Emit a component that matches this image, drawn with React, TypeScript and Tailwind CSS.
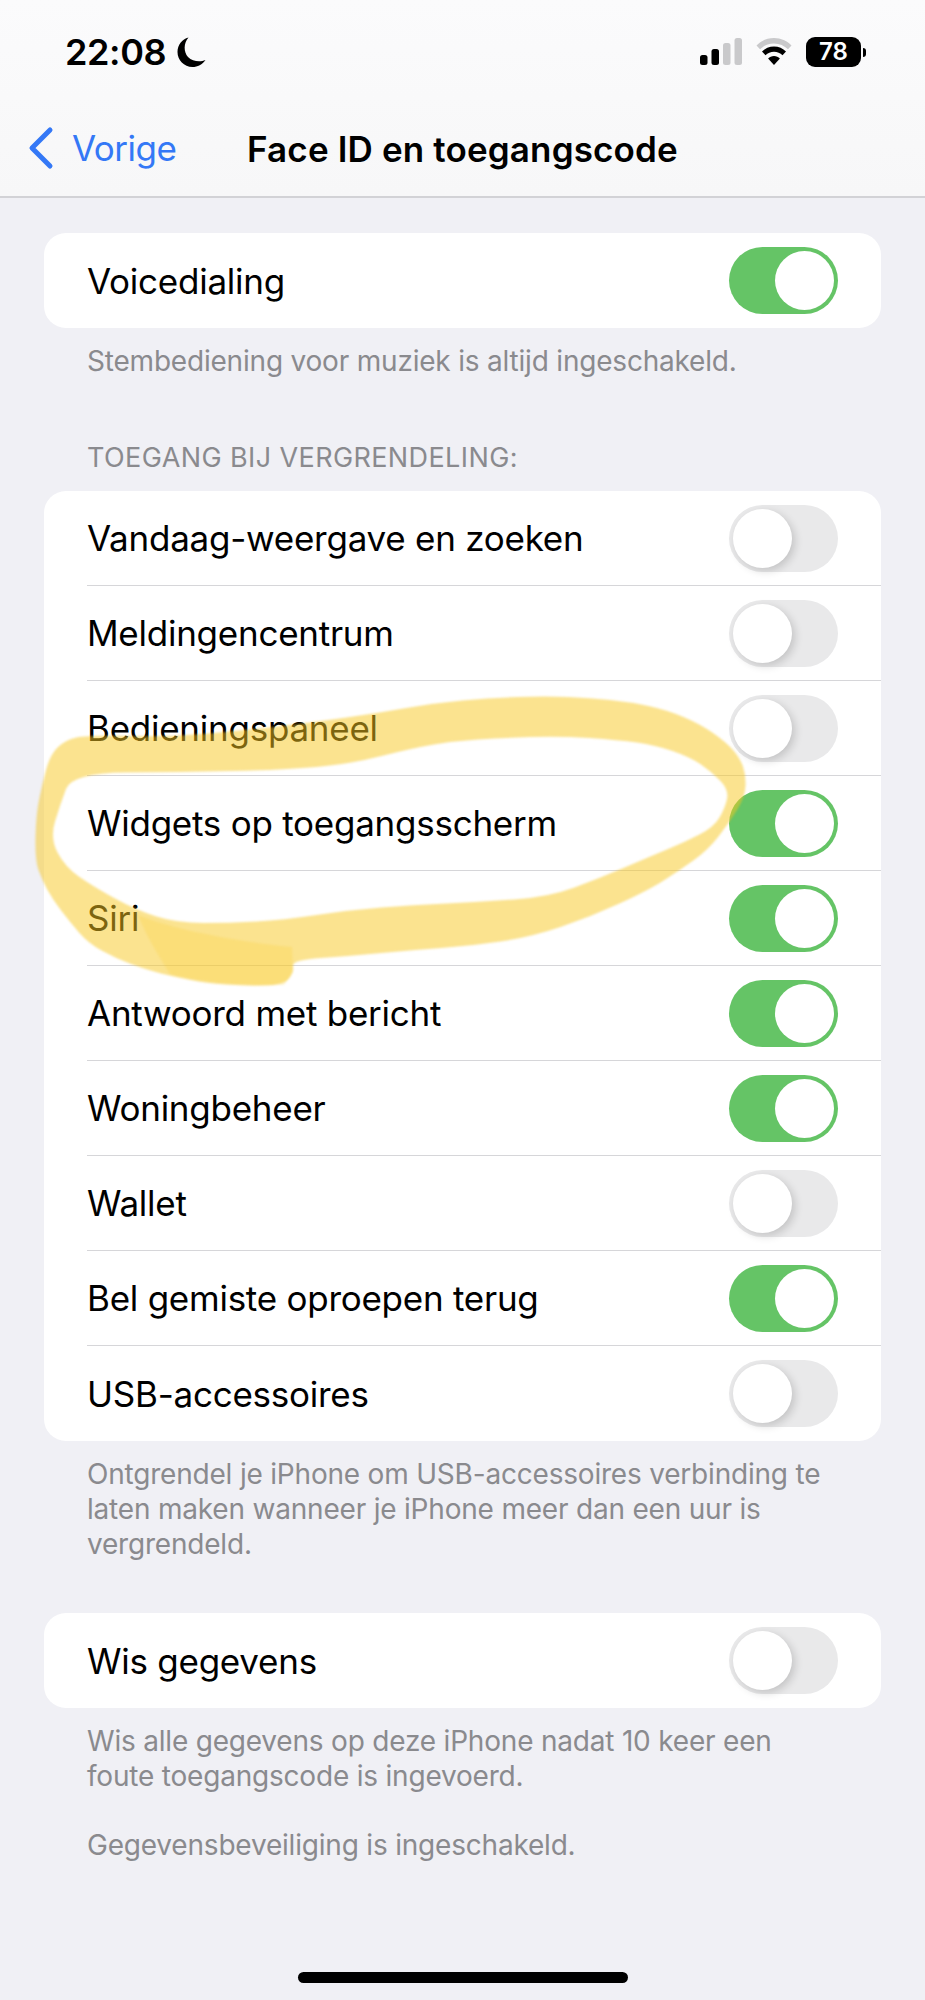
import React from 'react';

const FONT = "font-['Inter','Liberation_Sans',sans-serif]";

const Toggle: React.FC<{ on: boolean }> = ({ on }) => (
  <div className={`w-[109px] h-[67px] rounded-full flex items-center p-[4px] shrink-0 ${on ? 'bg-[#65c466] justify-end' : 'bg-[#e9e9ea] justify-start'}`}>
    <div className={`w-[59px] h-[59px] rounded-full bg-white ${on ? '' : 'shadow-[3px_3px_8px_rgba(0,0,0,0.16)]'}`} />
  </div>
);

const Row: React.FC<{ label: string; on: boolean; last?: boolean }> = ({ label, on, last }) => (
  <div className="pl-[43px]">
    <div className={`h-[95px] flex items-center justify-between pr-[43px] ${last ? '' : 'border-b border-[#d6d6d9]'}`}>
      <span className="text-[35px] leading-[42px] text-black tracking-[-0.25px]">{label}</span>
      <Toggle on={on} />
    </div>
  </div>
);

const Note: React.FC<{ children: React.ReactNode; className?: string }> = ({ children, className }) => (
  <p className={`px-[43px] text-[28px] leading-[35px] text-[#8a8a8e] tracking-[-0.2px] ${className ?? ''}`}>{children}</p>
);

const rows: [string, boolean][] = [
  ['Vandaag-weergave en zoeken', false],
  ['Meldingencentrum', false],
  ['Bedieningspaneel', false],
  ['Widgets op toegangsscherm', true],
  ['Siri', true],
  ['Antwoord met bericht', true],
  ['Woningbeheer', true],
  ['Wallet', false],
  ['Bel gemiste oproepen terug', true],
  ['USB-accessoires', false],
];

// marker outline, traced from the screenshot
const outer = [[88,735],[170,737],[248,730],[315,722],[378,713],[435,703],[490,698],[545,696],[590,698],[630,702],[667,710],[700,724],[726,742],[740,758],[746,775],[745,797],[729,823],[708,850],[680,870],[649,890],[590,917],[531,937],[470,946],[413,950],[350,956],[292,960],[294,972],[284,985],[245,986],[206,983],[175,977],[147,970],[115,958],[88,943],[70,922],[53,900],[42,880],[35,860],[36,815],[42,785],[50,755],[65,740]];
const inner = [[72,773],[60,805],[50,838],[65,867],[94,887],[136,910],[177,923],[230,923],[283,920],[350,910],[413,905],[480,902],[549,897],[600,878],[649,857],[685,842],[714,827],[725,808],[729,790],[712,772],[690,757],[655,745],[619,740],[560,736],[501,738],[455,741],[413,748],[350,764],[283,770],[180,772]];

const smooth = (pts: number[][]) => {
  const mid = (a: number[], b: number[]) => `${(a[0] + b[0]) / 2} ${(a[1] + b[1]) / 2}`;
  let d = `M${mid(pts[pts.length - 1], pts[0])}`;
  pts.forEach((p, i) => {
    d += `Q${p[0]} ${p[1]} ${mid(p, pts[(i + 1) % pts.length])}`;
  });
  return d + 'Z';
};

export default function App() {
  return (
    <div className={`relative w-[925px] h-[2000px] overflow-hidden bg-[#f0f0f5] ${FONT}`}>
      {/* Status bar + nav */}
      <header className="h-[198px] bg-gradient-to-b from-[#fbfbfc] to-[#f7f7f8] border-b-2 border-[#d2d2d6]">
        <div className="h-[104px] pt-[32px] pl-[65px] pr-[59px] flex items-start justify-between">
          <div className="flex items-center gap-[11px] h-[40px]">
            <span className="text-[36px] font-semibold text-black tracking-[-0.4px]">22:08</span>
            <svg width="29" height="30" viewBox="0 0 29 30"><path d="M11.5 0.5C6.5 6 6.5 15 11 20c4.5 4.5 12 5.5 17.5 3C25.500 27.500 20.500 30 15.500 30 7 30 0.500 23 0.500 15 0.500 8 5 2 11.500 0.500Z" fill="#000" /></svg>
          </div>
          <div className="flex items-center mt-[5px]">
            <svg width="42" height="28" viewBox="0 0 42 28" className="mr-[14px]">
              <rect x="0" y="17" width="7.5" height="10" rx="2.5" fill="#000" />
              <rect x="11.5" y="11" width="7.5" height="16" rx="2.5" fill="#000" />
              <rect x="23" y="5" width="7.5" height="22" rx="2.5" fill="#c9c9cb" />
              <rect x="34.5" y="0" width="7.5" height="27" rx="2.5" fill="#c9c9cb" />
            </svg>
            <svg width="36" height="28" viewBox="0 0 36 28" className="mr-[14px]">
              <path d="M18 0C11 0 5 2.8 0.5 7.5l3.5 3.8C7.6 7.6 12.5 5.4 18 5.4s10.4 2.2 14 5.9l3.5-3.8C31 2.8 25 0 18 0Z" fill="#c9c9cb" />
              <path d="M18 8.6c-4.7 0-8.9 1.9-12 5l3.5 3.7c2.2-2.2 5.2-3.5 8.5-3.5s6.3 1.3 8.5 3.5l3.5-3.7c-3.1-3.1-7.3-5-12-5Z" fill="#000" />
              <path d="M18 18c-2.3 0-4.4.9-5.9 2.4L18 27l5.9-6.6C22.4 18.9 20.3 18 18 18Z" fill="#000" />
            </svg>
            <div className="w-[55px] h-[30px] rounded-[9px] bg-black flex items-center justify-center text-white text-[24px] font-semibold leading-none">78</div>
            <div className="w-[3px] h-[9px] ml-[2px] bg-black rounded-r-full" />
          </div>
        </div>
        <div className="relative h-[92px] flex items-center">
          <svg width="30" height="44" viewBox="0 0 30 44" fill="none" className="ml-[26px] mt-[-4px]">
            <path d="M24 4 6 22l18 18" stroke="#3478f6" strokeWidth="5" strokeLinecap="round" strokeLinejoin="round" />
          </svg>
          <span className="ml-[16px] mt-[-3px] text-[35px] text-[#3478f6] tracking-[-0.5px]">Vorige</span>
          <span className="absolute left-0 right-0 top-[19px] text-center text-[35px] font-semibold text-black tracking-[0.15px]">Face ID en toegangscode</span>
        </div>
      </header>

      <main className="px-[44px] pt-[35px]">
        <section className="bg-white rounded-[22px]">
          <Row label="Voicedialing" on last />
        </section>
        <Note className="mt-[16px]">Stembediening voor muziek is altijd ingeschakeld.</Note>

        <h2 className="mt-[62px] px-[43px] text-[27px] leading-[34px] tracking-[0.4px] text-[#8a8a8e]">TOEGANG BIJ VERGRENDELING:</h2>
        <section className="mt-[16px] bg-white rounded-[22px]">
          {rows.map(([label, on], i) => (
            <Row key={label} label={label} on={on} last={i === rows.length - 1} />
          ))}
        </section>
        <Note className="mt-[16px]">
          Ontgrendel je iPhone om USB-accessoires verbinding te
          <br />
          laten maken wanneer je iPhone meer dan een uur is
          <br />
          vergrendeld.
        </Note>

        <section className="mt-[51px] bg-white rounded-[22px]">
          <Row label="Wis gegevens" on={false} last />
        </section>
        <Note className="mt-[16px]">
          Wis alle gegevens op deze iPhone nadat 10 keer een
          <br />
          foute toegangscode is ingevoerd.
        </Note>
        <Note className="mt-[34px]">Gegevensbeveiliging is ingeschakeld.</Note>
      </main>

      {/* Home indicator */}
      <div className="absolute left-[298px] top-[1972px] w-[330px] h-[11px] rounded-full bg-black" />

      {/* Hand-drawn marker over the screenshot */}
      <svg width="925" height="2000" viewBox="0 0 925 2000" className="absolute left-0 top-0 pointer-events-none blur-[1px]">
        <path d={smooth(outer) + smooth(inner)} fill="#f8c820" fillOpacity="0.5" fillRule="evenodd" />
        <path d="M138 915C170 928 225 940 292 947L293 972L284 985C240 986 200 982 170 974C158 955 146 935 138 915Z" fill="#f8c820" fillOpacity="0.2" />
      </svg>
    </div>
  );
}
